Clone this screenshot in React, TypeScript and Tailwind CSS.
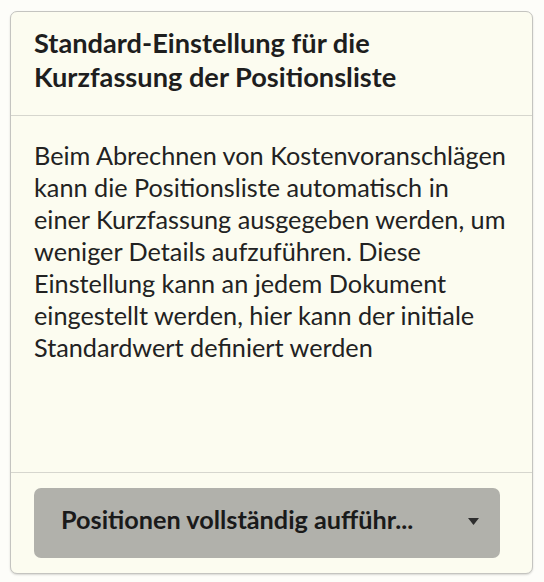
import React from 'react';

const body =
  'Beim Abrechnen von Kostenvoranschlägen kann die Positionsliste automatisch in einer Kurzfassung ausgegeben werden, um weniger Details aufzuführen. Diese Einstellung kann an jedem Dokument eingestellt werden, hier kann der initiale Standardwert definiert werden';

export default function App() {
  return (
    <div className="min-h-[582px] w-[544px] bg-[#fdfdf9] pl-[10px] pt-[11px] font-['Lato','Liberation_Sans',sans-serif] text-[#1e1e1e]">
      <div className="flex h-[563px] w-[523px] flex-col rounded-[7px] border border-[#c4c4c0] bg-[#fcfcf0] shadow-[0_1px_2px_rgba(0,0,0,0.15)]">
        {/* header */}
        <div className="border-b border-[#d6d6ce] pb-[21px] pl-[23px] pr-[20px] pt-[14px]">
          <h3 className="text-[27.2px] font-bold leading-[34px]">
            Standard-Einstellung für die
            <br />
            Kurzfassung der Positionsliste
          </h3>
        </div>

        {/* description */}
        <div className="flex-1 pl-[23px] pr-[24px] pt-[23px]">
          <p className="text-[25.25px] leading-[32px] text-[#222]">{body}</p>
        </div>

        {/* default value select */}
        <div className="border-t border-[#d6d6ce] pb-[15px] pl-[23px] pt-[15px]">
          <button className="flex h-[70px] w-[466px] items-center justify-between rounded-[7px] bg-[#b1b1ab] pl-[27px] pr-[21px] text-left">
            <span className="pb-[9px] text-[25.25px] font-bold leading-[30px] text-[#1a1a1a]">Positionen vollständig aufführ...</span>
            <svg width="11" height="7" viewBox="0 0 11 7" className="-mt-[3px] fill-[#2e2e2e]">
              <path d="M0 0h11L5.5 7z" />
            </svg>
          </button>
        </div>
      </div>
    </div>
  );
}
